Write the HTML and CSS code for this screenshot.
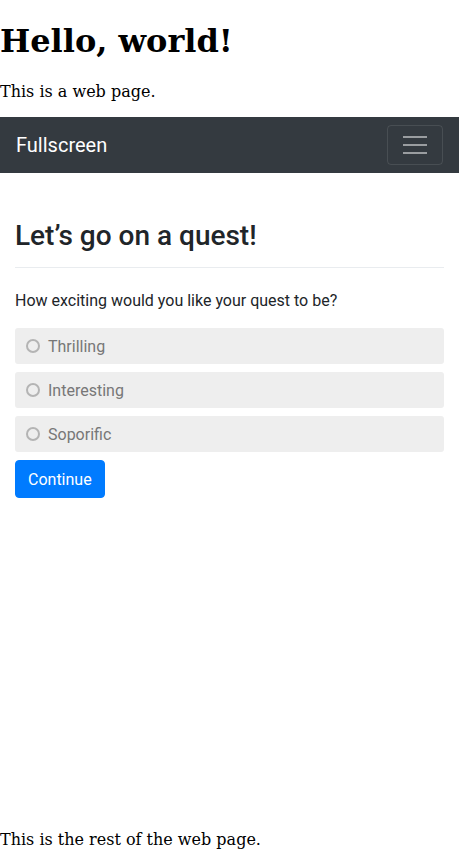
FILE: index.html
```html
<!DOCTYPE html>
<html lang="en">
<head>
<meta charset="utf-8">
<meta name="viewport" content="width=device-width, initial-scale=1">
<title>Hello, world!</title>
<link rel="stylesheet" href="styles.css">
</head>
<body>
<h1 class="page-title">Hello, world!</h1>
<p class="page-text">This is a web page.</p>
<main class="interview">
  <nav class="navbar">
    <a class="brand" href="#">Fullscreen</a>
    <button class="toggler" type="button" aria-label="Menu">
      <svg class="toggler-icon" viewBox="0 0 30 30" aria-hidden="true"><path d="M3 7h24M3 15h24M3 23h24" stroke="currentColor" stroke-width="2"/></svg>
    </button>
  </nav>
  <form class="question">
    <h2 class="question-title">Let’s go on a quest!</h2>
    <fieldset class="choices">
      <legend class="choices-label">How exciting would you like your quest to be?</legend>
      <label class="choice"><input class="choice-input" type="radio" name="excitement">Thrilling</label>
      <label class="choice"><input class="choice-input" type="radio" name="excitement">Interesting</label>
      <label class="choice"><input class="choice-input" type="radio" name="excitement">Soporific</label>
    </fieldset>
    <button class="continue" type="button">Continue</button>
  </form>
</main>
<p class="page-text">This is the rest of the web page.</p>
</body>
</html>
```

FILE: styles.css
```css
* {
  box-sizing: border-box;
}

body {
  display: flex;
  flex-direction: column;
  min-height: 100vh;
  margin: 0;
  padding-bottom: 2px;
  background: #fff;
  color: #000;
  font: 16px/19px "DejaVu Serif", serif;
}

.page-title {
  margin: 22px 0;
  font-size: 32px;
  line-height: 38px;
}

.page-text {
  margin: 0 0 16px;
}

.interview {
  flex: 1;
  margin-bottom: 16px;
  color: #212529;
  font: 16px/25px Roboto, sans-serif;
}

.navbar {
  display: flex;
  align-items: center;
  justify-content: space-between;
  padding: 8px 16px;
  background: #343a40;
}

.brand {
  color: #fff;
  font-size: 20px;
  line-height: 30px;
  text-decoration: none;
}

.toggler {
  display: flex;
  padding: 4px 12px;
  border: 1px solid rgba(255, 255, 255, 0.1);
  border-radius: 4px;
  background: transparent;
  color: rgba(255, 255, 255, 0.5);
}

.toggler-icon {
  width: 30px;
  height: 30px;
}

.question {
  padding: 46px 15px 0;
}

.question-title {
  margin: 0 0 20px;
  padding-bottom: 14px;
  border-bottom: 1px solid #e9ecef;
  font-size: 28px;
  font-weight: 500;
  line-height: 34px;
}

.choices {
  min-width: 0;
  margin: 0;
  padding: 0;
  border: 0;
}

.choices-label {
  padding: 0 0 15px;
}

.choice {
  display: flex;
  align-items: center;
  gap: 8px;
  margin-bottom: 8px;
  padding: 6px 11px 5px;
  border-radius: 3px;
  background: #eee;
  color: #777;
}

.choice-input {
  width: 14px;
  height: 14px;
  margin: 0 0 1px;
  border: 2px solid #b4b4b4;
  border-radius: 50%;
  appearance: none;
}

.choice-input:checked {
  background: #777;
}

.continue {
  padding: 6px 12px 5px;
  border: 1px solid #007bff;
  border-radius: 4px;
  background: #007bff;
  color: #fff;
  font: inherit;
}
```
